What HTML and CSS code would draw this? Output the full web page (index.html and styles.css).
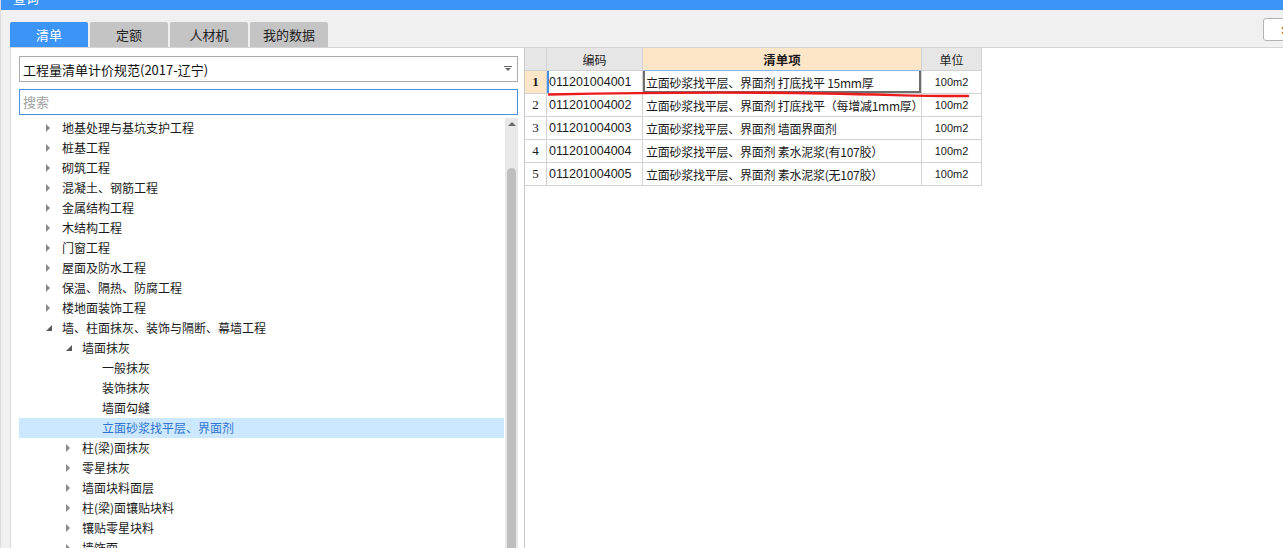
FILE: index.html
```html
<!DOCTYPE html>
<html lang="zh-CN">
<head>
    <meta charset="UTF-8">
    <title>查询</title>
    <link rel="stylesheet" href="styles.css">
</head>
<body>
    <div class="titlebar"><span>查询</span></div>

    <div class="toolbar">
        <div class="tab active">清单</div>
        <div class="tab">定额</div>
        <div class="tab">人材机</div>
        <div class="tab">我的数据</div>
        <div class="corner-btn"><span>:</span></div>
    </div>

    <div class="main">
        <div class="left">
            <div class="select">
                <span>工程量清单计价规范(2017-辽宁)</span>
                <svg class="select-arrow" width="8" height="6" viewBox="0 0 8 6">
                    <rect x="0" y="0" width="8" height="1" fill="#6a6a6a"/>
                    <path d="M1 2 L7 2 L4 5 Z" fill="#6a6a6a"/>
                </svg>
            </div>
            <div class="search">搜索</div>

            <div class="tree-wrap">
                <div class="tree">
                    <div class="node l1"><i class="tri closed"></i>地基处理与基坑支护工程</div>
                    <div class="node l1"><i class="tri closed"></i>桩基工程</div>
                    <div class="node l1"><i class="tri closed"></i>砌筑工程</div>
                    <div class="node l1"><i class="tri closed"></i>混凝土、钢筋工程</div>
                    <div class="node l1"><i class="tri closed"></i>金属结构工程</div>
                    <div class="node l1"><i class="tri closed"></i>木结构工程</div>
                    <div class="node l1"><i class="tri closed"></i>门窗工程</div>
                    <div class="node l1"><i class="tri closed"></i>屋面及防水工程</div>
                    <div class="node l1"><i class="tri closed"></i>保温、隔热、防腐工程</div>
                    <div class="node l1"><i class="tri closed"></i>楼地面装饰工程</div>
                    <div class="node l1"><i class="tri open"></i>墙、柱面抹灰、装饰与隔断、幕墙工程</div>
                    <div class="node l2"><i class="tri open"></i>墙面抹灰</div>
                    <div class="node l3"><i class="tri"></i>一般抹灰</div>
                    <div class="node l3"><i class="tri"></i>装饰抹灰</div>
                    <div class="node l3"><i class="tri"></i>墙面勾缝</div>
                    <div class="node l3 selected"><i class="tri"></i>立面砂浆找平层、界面剂</div>
                    <div class="node l2"><i class="tri closed"></i>柱(梁)面抹灰</div>
                    <div class="node l2"><i class="tri closed"></i>零星抹灰</div>
                    <div class="node l2"><i class="tri closed"></i>墙面块料面层</div>
                    <div class="node l2"><i class="tri closed"></i>柱(梁)面镶贴块料</div>
                    <div class="node l2"><i class="tri closed"></i>镶贴零星块料</div>
                    <div class="node l2"><i class="tri closed"></i>墙饰面</div>
                </div>
                <div class="scrollbar">
                    <div class="scroll-up"></div>
                    <div class="scroll-thumb"></div>
                </div>
            </div>
        </div>

        <div class="right">
            <div class="grid">
                <div class="cell head"></div>
                <div class="cell head">编码</div>
                <div class="cell head hot">清单项</div>
                <div class="cell head">单位</div>

                <div class="cell num current">1</div>
                <div class="cell code current">011201004001</div>
                <div class="cell name editing">立面砂浆找平层、界面剂 打底找平 15mm厚</div>
                <div class="cell unit">100m2</div>

                <div class="cell num">2</div>
                <div class="cell code">011201004002</div>
                <div class="cell name">立面砂浆找平层、界面剂 打底找平（每增减1mm厚）</div>
                <div class="cell unit">100m2</div>

                <div class="cell num">3</div>
                <div class="cell code">011201004003</div>
                <div class="cell name">立面砂浆找平层、界面剂 墙面界面剂</div>
                <div class="cell unit">100m2</div>

                <div class="cell num">4</div>
                <div class="cell code">011201004004</div>
                <div class="cell name">立面砂浆找平层、界面剂 素水泥浆(有107胶）</div>
                <div class="cell unit">100m2</div>

                <div class="cell num">5</div>
                <div class="cell code">011201004005</div>
                <div class="cell name">立面砂浆找平层、界面剂 素水泥浆(无107胶）</div>
                <div class="cell unit">100m2</div>
            </div>

            <!-- hand-drawn red underline on the first row -->
            <svg class="mark" width="460" height="12" viewBox="0 0 460 12">
                <path d="M24 5.5 C 120 3.5, 220 3, 300 4.5 S 400 7.5, 443 7" fill="none" stroke="#ec1b1b" stroke-width="2.4" stroke-linecap="round"/>
            </svg>
        </div>
    </div>
</body>
</html>
```

FILE: styles.css
```css
html, body {
    margin: 0;
    padding: 0;
    height: 100%;
    overflow: hidden;
}

body {
    font-family: "Noto Sans CJK SC", "Liberation Sans", sans-serif;
    font-size: 12px;
    color: #1a1a1a;
    background-color: #f0f0f0;
    border-left: 1px solid #dadada;
}

.titlebar {
    height: 10px;
    background-color: #3c94f6;
    overflow: hidden;
    padding-left: 12px;
}
.titlebar span {
    display: block;
    margin-top: -10px;
    line-height: 16px;
    font-size: 13px;
    color: white;
}

.toolbar {
    height: 37px;
    display: flex;
    align-items: flex-end;
    gap: 2px;
    padding-left: 9px;
}
.tab {
    width: 78px;
    height: 25px;
    line-height: 25px;
    text-align: center;
    font-size: 13px;
    background-color: #c4c4c4;
    color: #222;
    border-radius: 2px 2px 0 0;
}
.tab.active {
    background-color: #3c94f6;
    color: white;
}
.corner-btn {
    margin-left: auto;
    align-self: flex-start;
    margin-top: 8px;
    margin-right: -10px;
    width: 30px;
    height: 23px;
    background: white;
    border: 1px solid #b4b4b4;
    border-radius: 3px;
    box-sizing: border-box;
}
.corner-btn span {
    display: block;
    padding-left: 17px;
    line-height: 20px;
    color: #c8641e;
    font-weight: bold;
}

.main {
    display: flex;
    margin-left: 9px;
    height: calc(100% - 47px);
    background: white;
    border-top: 1px solid #d4d4d4;
}

.left {
    width: 499px;
    flex-shrink: 0;
    padding: 8px 6px 0 8px;
    border-left: 1px solid #dcdcdc;
    border-right: 1px solid #c8c8c8;
    display: flex;
    flex-direction: column;
}

.select {
    height: 26px;
    border: 1px solid #ababab;
    box-sizing: border-box;
    display: flex;
    align-items: center;
    justify-content: space-between;
    padding: 0 4px 0 3px;
    font-size: 13px;
    color: #111;
}
.select-arrow {
    margin-right: 1px;
}

.search {
    height: 26px;
    margin-top: 7px;
    border: 1px solid #4a90e2;
    box-sizing: border-box;
    padding-left: 3px;
    line-height: 24px;
    font-size: 13px;
    color: #a2a2a2;
}

.tree-wrap {
    display: flex;
    margin-top: 3px;
    flex: 1;
    overflow: hidden;
}
.tree {
    flex: 1;
}
.node {
    height: 20px;
    display: flex;
    align-items: center;
    white-space: nowrap;
    font-size: 12px;
    line-height: 18px;
}
.node.l1 { padding-left: 27px; }
.node.l2 { padding-left: 47px; }
.node.l3 { padding-left: 67px; }
.node.selected {
    background-color: #cce8ff;
    color: #2f74d0;
    margin-right: 1px;
}

.tri {
    display: inline-block;
    width: 16px;
    height: 10px;
    position: relative;
}
.tri.closed::before {
    content: "";
    position: absolute;
    left: 0;
    top: 1px;
    border-left: 4px solid #8a8a8a;
    border-top: 4px solid transparent;
    border-bottom: 4px solid transparent;
}
.tri.open::before {
    content: "";
    position: absolute;
    left: 0;
    top: 2px;
    border-right: 6px solid #5a5a5a;
    border-top: 6px solid transparent;
}

.scrollbar {
    width: 13px;
    background-color: #e8e8e8;
    display: flex;
    flex-direction: column;
    align-items: center;
}
.scroll-up {
    margin-top: 4px;
    border-bottom: 4px solid #6a6a6a;
    border-left: 4px solid transparent;
    border-right: 4px solid transparent;
}
.scroll-thumb {
    margin-top: 42px;
    width: 9px;
    flex: 1;
    background-color: #bebebe;
    border-radius: 5px 5px 0 0;
}

.right {
    flex: 1;
    position: relative;
}

.grid {
    display: grid;
    grid-template-columns: 22px 96px 279px 60px;
    grid-auto-rows: 23px;
}
.cell {
    box-sizing: border-box;
    border-right: 1px solid #d2d2d2;
    border-bottom: 1px solid #d2d2d2;
    display: flex;
    align-items: center;
    white-space: nowrap;
    overflow: hidden;
}
.cell.head {
    justify-content: center;
    background-color: #e6e6e6;
    font-size: 12px;
}
.cell.head.hot {
    background-color: #fde5c8;
    font-weight: bold;
    font-size: 12.5px;
    border-bottom-color: #8bb6ea;
}
.cell.num {
    justify-content: center;
    font-family: "Liberation Serif", serif;
    font-size: 13px;
}
.cell.num.current {
    background-color: #fde5c8;
    font-weight: bold;
}
.cell.code {
    padding-left: 2px;
    font-family: "Liberation Sans", sans-serif;
    font-size: 12.5px;
}
.cell.code.current {
    box-shadow: inset 2px 0 0 #4a90e2;
}
.cell.name {
    padding-left: 3px;
    font-size: 12px;
    letter-spacing: -0.25px;
}
.cell.name.editing {
    box-shadow: inset 2px 0 0 #6e6e6e, inset -2px 0 0 #6e6e6e, inset 0 -2px 0 #6e6e6e;
}
.cell.unit {
    justify-content: center;
    font-family: "Liberation Sans", sans-serif;
    font-size: 11px;
}

.mark {
    position: absolute;
    left: 0;
    top: 41px;
}
```
